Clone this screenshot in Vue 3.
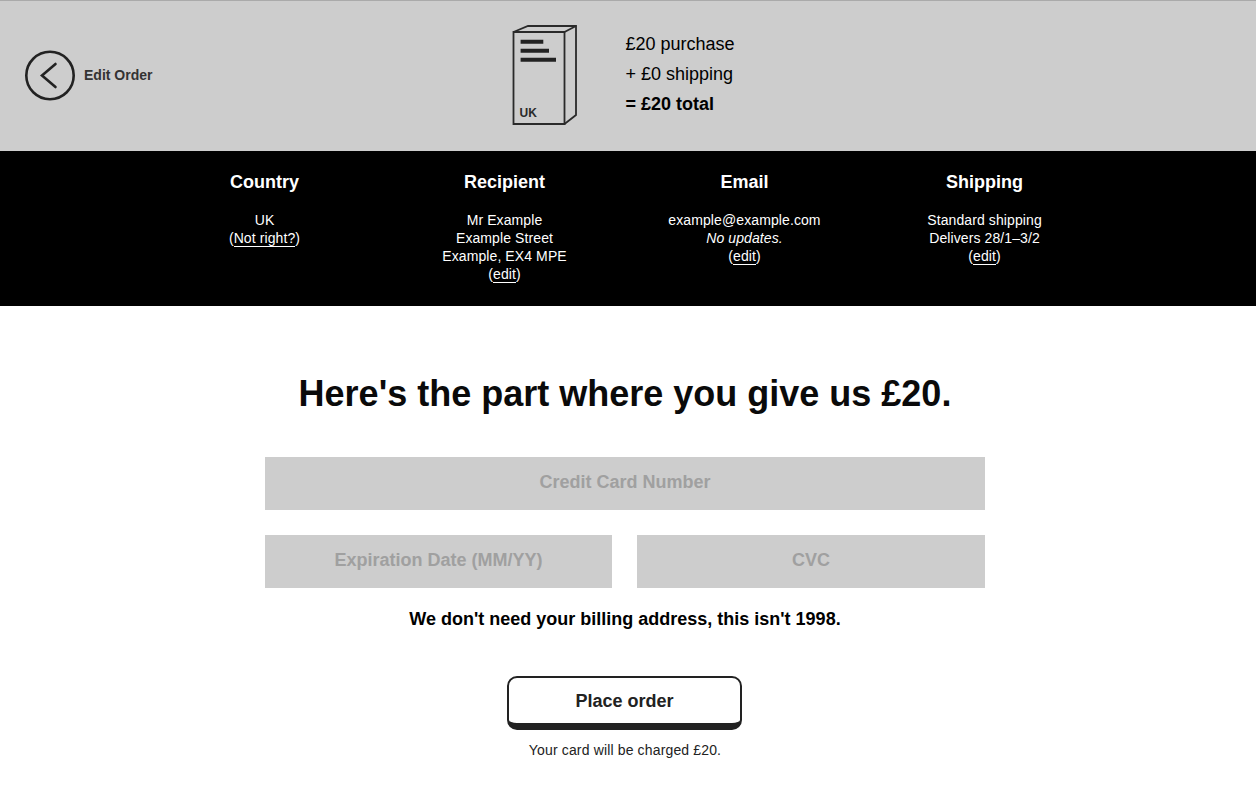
<script setup>
const columns = [
  { title: 'Country', lines: ['UK'], link: 'Not right?' },
  { title: 'Recipient', lines: ['Mr Example', 'Example Street', 'Example, EX4 MPE'], link: 'edit' },
  { title: 'Email', lines: ['example@example.com'], note: 'No updates.', link: 'edit' },
  { title: 'Shipping', lines: ['Standard shipping', 'Delivers 28/1–3/2'], link: 'edit' }
]
</script>

<template>
  <div class="page">
    <header class="top">
      <a class="back">
        <svg width="52" height="52" viewBox="0 0 52 52" fill="none" stroke="#222" stroke-width="2.6">
          <circle cx="25" cy="25.500" r="23.700" />
          <path d="M30.500 14 L17 25.500 L30.500 37" stroke-linecap="round" />
        </svg>
        <span>Edit Order</span>
      </a>
      <div class="summary">
        <div class="box">
          <svg width="66" height="102" viewBox="0 0 66 102" fill="none" stroke="#2a2a2a" stroke-width="1.8">
            <path d="M1.500 7 H52.500 V99 H1.500 Z" />
            <path d="M1.500 7 L16 1 H64 V90 L52.500 99" />
            <path d="M52.500 7 L64 1" />
            <path d="M8.600 16.700 H31.300 M8.600 25.700 H37 M8.600 34.700 H44" stroke="#222" stroke-width="4" />
          </svg>
          <span class="uk">UK</span>
        </div>
        <div class="sums">
          <div>£20 purchase</div>
          <div>+ £0 shipping</div>
          <div class="total">= £20 total</div>
        </div>
      </div>
    </header>

    <section class="details">
      <div v-for="col in columns" :key="col.title" class="col">
        <h3>{{ col.title }}</h3>
        <p>
          <template v-for="line in col.lines" :key="line">{{ line }}<br /></template>
          <template v-if="col.note"><em>{{ col.note }}</em><br /></template>
          (<a class="link">{{ col.link }}</a>)
        </p>
      </div>
    </section>

    <main class="pay">
      <h1>Here's the part where you give us £20.</h1>
      <div class="field">Credit Card Number</div>
      <div class="row">
        <div class="field exp">Expiration Date (MM/YY)</div>
        <div class="field cvc">CVC</div>
      </div>
      <p class="billing">We don't need your billing address, this isn't 1998.</p>
      <button class="place">Place order</button>
      <p class="charge">Your card will be charged £20.</p>
    </main>
  </div>
</template>

<style scoped>
.page {
  font-family: "Liberation Sans", Arial, sans-serif;
  color: #000;
}

.top {
  position: relative;
  height: 150px;
  background: #cdcdcd;
  border-top: 1px solid #aaa;
}

.back {
  position: absolute;
  left: 25px;
  top: 49px;
  display: flex;
  align-items: center;
  gap: 7px;
  font-size: 14px;
  font-weight: bold;
  color: #333;
}

.back span {
  margin-top: -3px;
}

.summary {
  display: flex;
  justify-content: center;
  padding-top: 24px;
  padding-left: 12px;
}

.box {
  position: relative;
  width: 66px;
  height: 102px;
  margin-left: -1px;
}

.uk {
  position: absolute;
  left: 8px;
  bottom: 7px;
  font-size: 12px;
  font-weight: bold;
  color: #2a2a2a;
}

.sums {
  margin-left: 48px;
  padding-top: 4px;
  font-size: 18px;
  line-height: 30px;
  width: 130px;
}

.total {
  font-weight: bold;
}

.details {
  display: flex;
  justify-content: center;
  height: 155px;
  background: #000;
  color: #fff;
  text-align: center;
  padding-right: 7px;
  box-sizing: border-box;
}

.col {
  width: 240px;
}

.col h3 {
  margin: 20px 0 0;
  font-size: 18px;
  line-height: 22px;
}

.col p {
  margin: 18px 0 0;
  font-size: 14px;
  line-height: 18px;
  letter-spacing: 0.1px;
}

.link {
  border-bottom: 1px solid #fff;
}

.pay {
  text-align: center;
  padding-top: 66px;
  width: 720px;
  margin: 0 auto;
  padding-right: 6px;
}

.pay h1 {
  margin: 0 0 42px;
  font-size: 36px;
  line-height: 43px;
  color: #0a0a0a;
  white-space: nowrap;
}

.field {
  height: 53px;
  line-height: 51px;
  background: #cdcdcd;
  color: #a0a0a0;
  font-size: 18px;
  font-weight: bold;
}

.row {
  display: flex;
  gap: 25px;
  margin-top: 25px;
}

.exp {
  width: 347px;
}

.cvc {
  width: 348px;
}

.billing {
  margin: 20px 0 0;
  font-size: 18px;
  line-height: 22px;
  font-weight: bold;
}

.place {
  display: block;
  width: 235px;
  height: 54px;
  margin: 46px 0 0 242px;
  border: 2px solid #222;
  border-bottom-width: 7px;
  border-radius: 10px;
  background: #fff;
  color: #222;
  font: bold 18px "Liberation Sans", Arial, sans-serif;
  padding: 1px 0 0;
}

.charge {
  margin: 11px 0 0;
  font-size: 14px;
  line-height: 18px;
  color: #222;
  letter-spacing: 0.15px;
}
</style>
